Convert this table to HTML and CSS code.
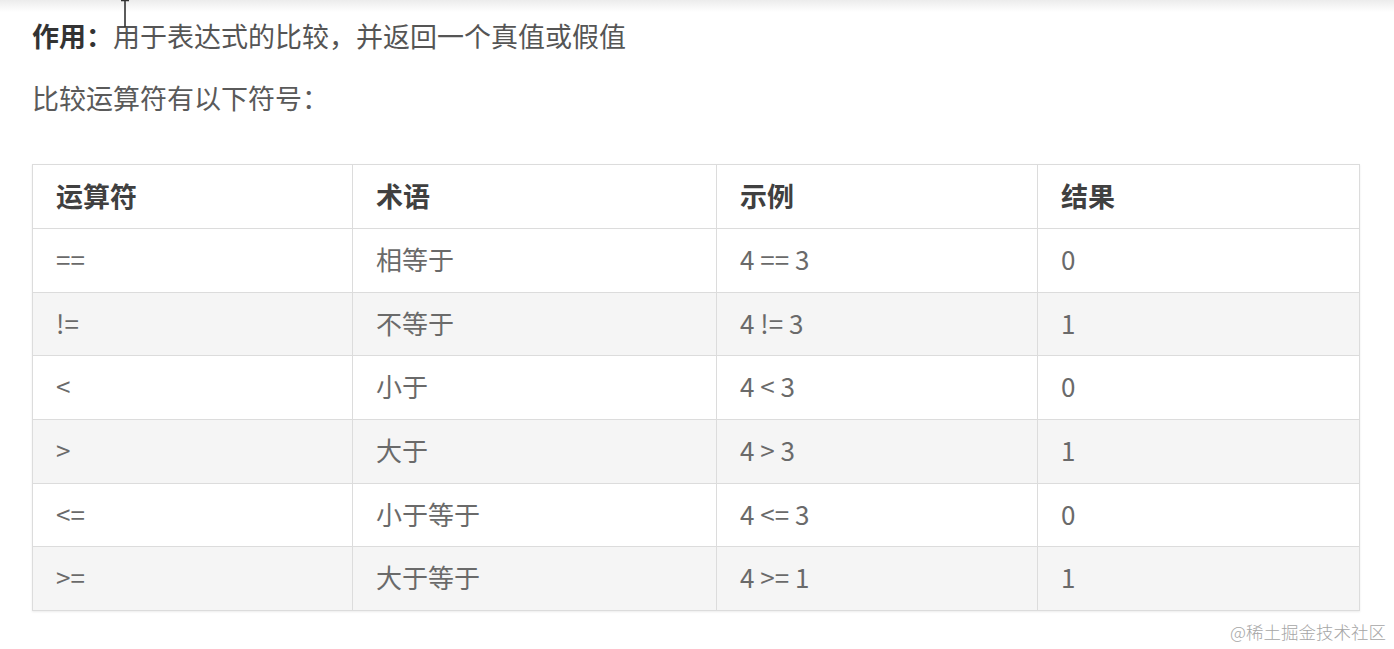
FILE: index.html
```html
<!DOCTYPE html>
<html lang="zh-CN">
<head>
<meta charset="utf-8">
<title>比较运算符</title>
<link rel="stylesheet" href="styles.css">
</head>
<body>
<div class="topband"></div>
<main class="page">
  <p class="lead"><strong>作用：</strong>用于表达式的比较，并返回一个真值或假值</p>
  <p class="sub">比较运算符有以下符号：</p>
  <table class="ops">
    <colgroup>
      <col class="c1"><col class="c2"><col class="c3"><col class="c4">
    </colgroup>
    <thead>
      <tr><th>运算符</th><th>术语</th><th>示例</th><th>结果</th></tr>
    </thead>
    <tbody>
      <tr><td>==</td><td>相等于</td><td>4 == 3</td><td>0</td></tr>
      <tr><td>!=</td><td>不等于</td><td>4 != 3</td><td>1</td></tr>
      <tr><td>&lt;</td><td>小于</td><td>4 &lt; 3</td><td>0</td></tr>
      <tr><td>&gt;</td><td>大于</td><td>4 &gt; 3</td><td>1</td></tr>
      <tr><td>&lt;=</td><td>小于等于</td><td>4 &lt;= 3</td><td>0</td></tr>
      <tr><td>&gt;=</td><td>大于等于</td><td>4 &gt;= 1</td><td>1</td></tr>
    </tbody>
  </table>
</main>
<svg class="cursor" width="12" height="30" viewBox="0 0 12 30"><path d="M2 1.5H10M6 1.5V28" stroke="#333" stroke-width="1.6" fill="none"/></svg>
<div class="watermark">@稀土掘金技术社区</div>
</body>
</html>
```

FILE: styles.css
```css
html, body {
  margin: 0;
  padding: 0;
  background: #ffffff;
}
body {
  position: relative;
  width: 1394px;
  height: 649px;
  overflow: hidden;
  font-family: "Noto Sans CJK SC", "Noto Sans", sans-serif;
}
.topband {
  position: absolute;
  left: 0;
  top: 0;
  width: 100%;
  height: 12px;
  background: linear-gradient(#ececec, #ffffff);
}
.page {
  position: relative;
  padding-left: 32px;
}
.lead {
  margin: 0;
  height: 72px;
  line-height: 72px;
  font-size: 27px;
  color: #555;
}
.lead strong {
  color: #333;
  font-weight: 700;
}
.sub {
  margin: 0 0 40px 0;
  height: 52px;
  line-height: 52px;
  font-size: 27px;
  color: #5a5a5a;
}
.ops {
  border-collapse: collapse;
  table-layout: fixed;
  width: 1327px;
  border: 1px solid #d8d8d8;
  box-shadow: 0 1px 2px rgba(0,0,0,0.08);
}
.c1 { width: 320px; }
.c2 { width: 364px; }
.c3 { width: 321px; }
.c4 { width: 322px; }
.ops th, .ops td {
  border: 1px solid #dcdcdc;
  text-align: left;
  vertical-align: middle;
}
.ops th {
  height: 61px;
  padding: 0 0 2px 23px;
  font-size: 27px;
  font-weight: 700;
  color: #404040;
  background: #ffffff;
}
.ops td {
  height: 58.7px;
  padding: 0 0 4px 23px;
  font-size: 26px;
  color: #6a6a6a;
}
.ops tbody tr:nth-child(odd) td { background: #ffffff; }
.ops tbody tr:nth-child(even) td { background: #f5f5f5; }
.cursor {
  position: absolute;
  left: 119px;
  top: -1px;
}
.watermark {
  position: absolute;
  right: 8px;
  top: 620px;
  font-size: 17.5px;
  line-height: 24px;
  color: #a6a6a6;
  font-weight: 300;
}
```
